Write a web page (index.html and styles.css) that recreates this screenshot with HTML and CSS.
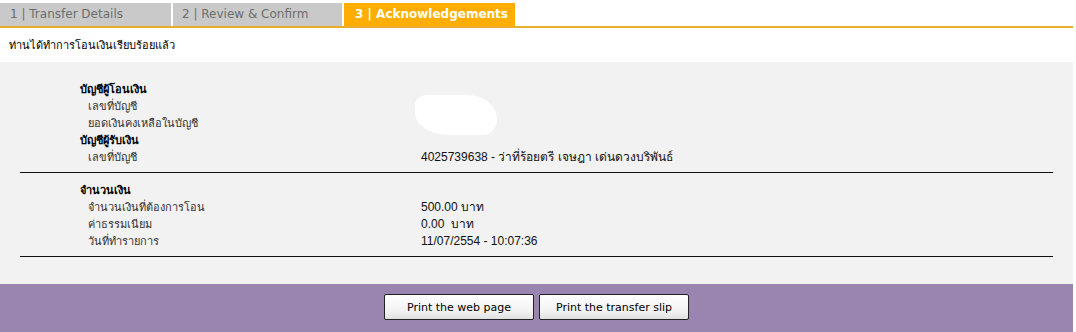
FILE: index.html
```html
<!DOCTYPE html>
<html lang="th">
<head>
<meta charset="utf-8">
<link rel="stylesheet" href="styles.css">
</head>
<body>
<div class="page">
  <div class="tabs">
    <div class="tab">1 | Transfer Details</div>
    <div class="tab tab-2">2 | Review &amp; Confirm</div>
    <div class="tab tab-active">3 | Acknowledgements</div>
  </div>
  <div class="notice">ท่านได้ทำการโอนเงินเรียบร้อยแล้ว</div>
  <div class="panel">
    <div class="section">
      <div class="head">บัญชีผู้โอนเงิน</div>
      <div class="row"><span class="label">เลขที่บัญชี</span><span class="value"></span></div>
      <div class="row"><span class="label">ยอดเงินคงเหลือในบัญชี</span><span class="value"></span></div>
      <div class="head">บัญชีผู้รับเงิน</div>
      <div class="row"><span class="label">เลขที่บัญชี</span><span class="value">4025739638 - ว่าที่ร้อยตรี เจษฎา เด่นดวงบริพันธ์</span></div>
      <div class="blob"></div>
    </div>
    <div class="section">
      <div class="head">จำนวนเงิน</div>
      <div class="row"><span class="label">จำนวนเงินที่ต้องการโอน</span><span class="value">500.00 บาท</span></div>
      <div class="row"><span class="label">ค่าธรรมเนียม</span><span class="value">0.00&nbsp; บาท</span></div>
      <div class="row"><span class="label">วันที่ทำรายการ</span><span class="value">11/07/2554 - 10:07:36</span></div>
    </div>
  </div>
  <div class="footer">
    <button class="btn">Print the web page</button>
    <button class="btn">Print the transfer slip</button>
  </div>
</div>
</body>
</html>
```
FILE: styles.css
```css
html, body {
  margin: 0;
  padding: 0;
  background: #ffffff;
}
body {
  font-family: "DejaVu Sans", Tahoma, "Noto Sans", sans-serif;
  color: #000;
}
.page {
  width: 1073px;
  height: 332px;
  display: flex;
  flex-direction: column;
}
.tabs {
  display: flex;
  padding-top: 3px;
  border-bottom: 2px solid #e8ad2c;
  height: 23px;
}
.tab {
  width: 161px;
  padding-left: 10px;
  background: #c9c9c9;
  color: #6d6d6d;
  font-size: 12px;
  line-height: 23px;
  margin-right: 2px;
}
.tab-2 {
  width: 160px;
  padding-left: 9px;
  margin-right: 2px;
}
.tab-active {
  width: 160px;
  padding-left: 11px;
  background: #ffae00;
  color: #ffffff;
  font-weight: bold;
  margin-right: 0;
}
.notice {
  font-size: 11px;
  height: 34px;
  line-height: 36px;
  padding-left: 9px;
}
.panel {
  background: #f2f2f2;
  padding: 14px 20px 0 20px;
  height: 208px;
}
.section {
  position: relative;
  border-bottom: 1px solid #111;
  padding: 5px 0 6px 60px;
}
.section + .section {
  padding-top: 9px;
}
.head {
  font-size: 11px;
  font-weight: bold;
  line-height: 17px;
  height: 17px;
}
.row {
  display: flex;
  font-size: 11px;
  line-height: 17px;
  height: 17px;
  color: #222;
}
.label {
  width: 333px;
  padding-left: 8px;
  color: #333;
}
.value {
  font-family: "Liberation Sans", Arial, sans-serif;
  font-size: 12px;
  color: #111;
}
.blob {
  position: absolute;
  left: 395px;
  top: 19px;
  width: 82px;
  height: 40px;
  background: #ffffff;
  border-radius: 12px 30px 14px 34px / 10px 24px 16px 22px;
}
.footer {
  background: #9a85b0;
  flex: 1;
  display: flex;
  justify-content: center;
  align-items: flex-start;
  gap: 5px;
  padding-top: 10px;
}
.btn {
  width: 150px;
  height: 26px;
  border: 1px solid #222;
  border-radius: 2px;
  background: linear-gradient(#ffffff, #f1f1f1 70%, #e0e0e0);
  font-family: "DejaVu Sans", Tahoma, sans-serif;
  font-size: 11px;
  color: #000;
  padding: 0;
}
```
